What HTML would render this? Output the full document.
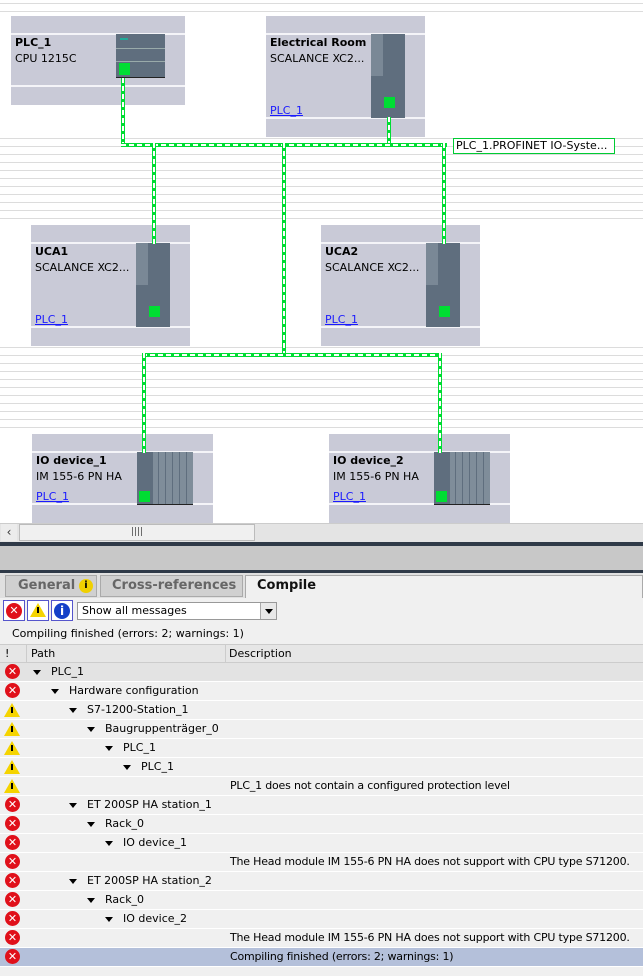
<!DOCTYPE html><html><head><style>
*{margin:0;padding:0;box-sizing:border-box}
body{width:643px;height:976px;position:relative;overflow:hidden;background:#fff;font-family:"DejaVu Sans","Liberation Sans",sans-serif;font-size:11px;color:#000}
.a{position:absolute}
.grid{position:absolute;left:0;width:643px;background:repeating-linear-gradient(to bottom,#dcdcdc 0 1px,transparent 1px 8px)}
.dev{position:absolute;background:#c9cad7}
.dev .l{position:absolute;left:0;right:0;height:2px;background:#f4f4f8}
.dev b{position:absolute;font-weight:bold;font-size:11px}
.dev span{position:absolute;font-size:11px}
.dev u{position:absolute;color:#1a1aff;font-size:11px}
.sw{position:absolute;background:#5f6e7e}
.sw .s{position:absolute;left:0;top:0;width:12px;height:42px;background:#7a8896}
.g{position:absolute;background:#00dd33}
.bh{position:absolute;height:4px;background:#00dd33}
.bh i,.bv i{position:absolute}
.bh i{left:0;right:0;top:1px;height:2px;background:repeating-linear-gradient(to right,#fff 0 5px,transparent 5px 8px)}
.bv{position:absolute;width:4px;background:#00dd33}
.bv i{top:0;bottom:0;left:1px;width:2px;background:repeating-linear-gradient(to bottom,#fff 0 5px,transparent 5px 8px)}
.row{position:absolute;left:0;width:643px;height:19px;background:#f0f0f0;border-bottom:1px solid #fff;font-size:11px;line-height:18px}
.row .t{position:absolute;white-space:nowrap}
.row .d{position:absolute;left:230px;white-space:nowrap;letter-spacing:-0.2px}
.e{position:absolute;left:5px;top:1px;width:15px;height:15px;border-radius:50%;background:#e0101a;color:#fff;font-weight:bold;font-size:11px;line-height:15px;text-align:center}
.w{position:absolute;left:4px;top:2px;width:0;height:0;border-left:8px solid transparent;border-right:8px solid transparent;border-bottom:14px solid #f5d400}
.w:after{content:"";position:absolute;left:-1px;top:4px;width:2px;height:6px;background:#000}
.tri{position:absolute;top:7px;width:0;height:0;border-left:4px solid transparent;border-right:4px solid transparent;border-top:5px solid #000}
</style></head><body>
<div class="grid" style="top:3px;height:10px"></div>
<div class="grid" style="top:138px;height:82px"></div>
<div class="grid" style="top:347px;height:85px"></div>

<div class="dev" style="left:11px;top:16px;width:174px;height:89px">
<div class="l" style="top:17px"></div><div class="l" style="top:69px"></div>
<b style="left:4px;top:20px">PLC_1</b><span style="left:4px;top:36px">CPU 1215C</span></div>
<div class="sw" style="left:116px;top:34px;width:49px;height:44px;border-bottom:1px solid #222"><div class="a" style="left:0;top:14px;width:49px;height:1px;background:#9aa"></div><div class="a" style="left:0;top:27px;width:49px;height:1px;background:#9aa"></div><div class="a" style="left:4px;top:4px;width:8px;height:2px;background:#2a9"></div></div>
<div class="g" style="left:119px;top:63px;width:11px;height:12px"></div>

<div class="dev" style="left:266px;top:16px;width:159px;height:121px">
<div class="l" style="top:17px"></div><div class="l" style="top:101px"></div>
<b style="left:4px;top:20px">Electrical Room</b><span style="left:4px;top:36px">SCALANCE XC2...</span><u style="left:4px;top:88px">PLC_1</u></div>
<div class="sw" style="left:371px;top:34px;width:34px;height:84px"><div class="s"></div></div>
<div class="g" style="left:384px;top:97px;width:11px;height:11px"></div>

<div class="dev" style="left:31px;top:225px;width:159px;height:121px">
<div class="l" style="top:17px"></div><div class="l" style="top:101px"></div>
<b style="left:4px;top:20px">UCA1</b><span style="left:4px;top:36px">SCALANCE XC2...</span><u style="left:4px;top:88px">PLC_1</u></div>
<div class="sw" style="left:136px;top:243px;width:34px;height:84px"><div class="s"></div></div>
<div class="g" style="left:149px;top:306px;width:11px;height:11px"></div>

<div class="dev" style="left:321px;top:225px;width:159px;height:121px">
<div class="l" style="top:17px"></div><div class="l" style="top:101px"></div>
<b style="left:4px;top:20px">UCA2</b><span style="left:4px;top:36px">SCALANCE XC2...</span><u style="left:4px;top:88px">PLC_1</u></div>
<div class="sw" style="left:426px;top:243px;width:34px;height:84px"><div class="s"></div></div>
<div class="g" style="left:439px;top:306px;width:11px;height:11px"></div>

<div class="dev" style="left:32px;top:434px;width:181px;height:89px">
<div class="l" style="top:17px"></div><div class="l" style="top:69px"></div>
<b style="left:4px;top:20px">IO device_1</b><span style="left:4px;top:36px">IM 155-6 PN HA</span><u style="left:4px;top:56px">PLC_1</u></div>
<div class="sw" style="left:137px;top:452px;width:56px;height:53px;border-bottom:1px solid #222;background:repeating-linear-gradient(to right,#5f6e7e 0 1px,#7f8d9a 1px 7px)"><div class="a" style="left:0;top:0;width:16px;height:52px;background:#5f6e7e"></div></div>
<div class="g" style="left:139px;top:491px;width:11px;height:11px"></div>

<div class="dev" style="left:329px;top:434px;width:181px;height:89px">
<div class="l" style="top:17px"></div><div class="l" style="top:69px"></div>
<b style="left:4px;top:20px">IO device_2</b><span style="left:4px;top:36px">IM 155-6 PN HA</span><u style="left:4px;top:56px">PLC_1</u></div>
<div class="sw" style="left:434px;top:452px;width:56px;height:53px;border-bottom:1px solid #222;background:repeating-linear-gradient(to right,#5f6e7e 0 1px,#7f8d9a 1px 7px)"><div class="a" style="left:0;top:0;width:16px;height:52px;background:#5f6e7e"></div></div>
<div class="g" style="left:436px;top:491px;width:11px;height:11px"></div>

<div class="bv" style="left:121px;top:78px;height:69px"><i></i></div>
<div class="bv" style="left:387px;top:117px;height:30px"><i></i></div>
<div class="bh" style="left:121px;top:143px;width:326px"><i></i></div>
<div class="bv" style="left:152px;top:143px;height:101px"><i></i></div>
<div class="bv" style="left:282px;top:143px;height:214px"><i></i></div>
<div class="bv" style="left:442px;top:143px;height:101px"><i></i></div>
<div class="bh" style="left:142px;top:353px;width:300px"><i></i></div>
<div class="bv" style="left:142px;top:353px;height:100px"><i></i></div>
<div class="bv" style="left:438px;top:353px;height:100px"><i></i></div>
<div class="a" style="left:453px;top:138px;width:162px;height:16px;border:1px solid #00cc33;background:#fff;font-size:11px;line-height:14px;padding-left:2px">PLC_1.PROFINET IO-Syste...</div>

<div class="a" style="left:0;top:523px;width:643px;height:19px;background:#e4e4e4;border-top:1px solid #ccc"></div>
<div class="a" style="left:1px;top:524px;width:16px;height:17px;background:#ececec;font-size:12px;line-height:16px;text-align:center;color:#333">&lsaquo;</div>
<div class="a" style="left:19px;top:524px;width:236px;height:17px;background:#f0f0f0;border:1px solid #bbb;text-align:center;font-size:9px;line-height:15px;color:#444">||||</div>
<div class="a" style="left:0;top:542px;width:643px;height:4px;background:#2f3a48"></div>
<div class="a" style="left:0;top:546px;width:643px;height:26px;background:#c8c8c8"></div>
<div class="a" style="left:0;top:570px;width:643px;height:3px;background:#2f3a48"></div>
<div class="a" style="left:0;top:573px;width:643px;height:26px;background:#e0e0e0"></div>
<div class="a" style="left:5px;top:575px;width:92px;height:22px;background:#d0d0d0;border:1px solid #aaa;font-size:13px;font-weight:bold;color:#666;padding:2px 0 0 12px">General</div>
<div class="a" style="left:79px;top:579px;width:14px;height:14px;border-radius:50%;background:#f0d000;font-size:10px;font-weight:bold;text-align:center;line-height:14px">i</div>
<div class="a" style="left:100px;top:575px;width:143px;height:22px;background:#d0d0d0;border:1px solid #aaa;font-size:13px;font-weight:bold;color:#666;padding:2px 0 0 11px">Cross-references</div>
<div class="a" style="left:245px;top:575px;width:398px;height:24px;background:#f0f0f0;border:1px solid #aaa;border-bottom:none;font-size:13px;font-weight:bold;color:#111;padding:2px 0 0 11px">Compile</div>
<div class="a" style="left:0;top:598px;width:643px;height:378px;background:#f0f0f0"></div>
<div class="a" style="left:3px;top:600px;width:22px;height:21px;border:1px solid #55c;background:#fff"><div class="e" style="left:2px;top:2px;width:16px;height:16px;line-height:16px">✕</div></div>
<div class="a" style="left:27px;top:600px;width:22px;height:21px;border:1px solid #55c;background:#fff"><div class="w" style="left:2px;top:2px"></div></div>
<div class="a" style="left:51px;top:600px;width:22px;height:21px;border:1px solid #55c;background:#fff"><div class="a" style="left:2px;top:2px;width:16px;height:16px;border-radius:50%;background:#1540c8;color:#fff;font-weight:bold;text-align:center;line-height:16px;font-size:12px">i</div></div>
<div class="a" style="left:77px;top:602px;width:200px;height:18px;background:#fff;border:1px solid #999;font-size:11px;line-height:16px;padding-left:4px">Show all messages</div>
<div class="a" style="left:260px;top:603px;width:16px;height:16px;background:#e8e8e8;border-left:1px solid #aaa"><div class="tri" style="left:4px;top:6px"></div></div>
<div class="a" style="left:12px;top:627px;font-size:11px">Compiling finished (errors: 2; warnings: 1)</div>
<div class="a" style="left:0;top:644px;width:643px;height:19px;background:#e6e6e6;border-top:1px solid #ccc;border-bottom:1px solid #ccc;font-size:11px;line-height:17px"><span class="a" style="left:5px">!</span><span class="a" style="left:26px;top:0;width:1px;height:17px;background:#ccc"></span><span class="a" style="left:31px">Path</span><span class="a" style="left:225px;top:0;width:1px;height:17px;background:#ccc"></span><span class="a" style="left:229px">Description</span></div>

<div class="row" style="top:663px;background:#e3e3e3"><div class="e">✕</div><div class="tri" style="left:33px"></div><span class="t" style="left:51px">PLC_1</span></div>
<div class="row" style="top:682px"><div class="e">✕</div><div class="tri" style="left:51px"></div><span class="t" style="left:69px">Hardware configuration</span></div>
<div class="row" style="top:701px"><div class="w"></div><div class="tri" style="left:69px"></div><span class="t" style="left:87px">S7-1200-Station_1</span></div>
<div class="row" style="top:720px"><div class="w"></div><div class="tri" style="left:87px"></div><span class="t" style="left:105px">Baugruppenträger_0</span></div>
<div class="row" style="top:739px"><div class="w"></div><div class="tri" style="left:105px"></div><span class="t" style="left:123px">PLC_1</span></div>
<div class="row" style="top:758px"><div class="w"></div><div class="tri" style="left:123px"></div><span class="t" style="left:141px">PLC_1</span></div>
<div class="row" style="top:777px"><div class="w"></div><span class="d">PLC_1 does not contain a configured protection level</span></div>
<div class="row" style="top:796px"><div class="e">✕</div><div class="tri" style="left:69px"></div><span class="t" style="left:87px">ET 200SP HA station_1</span></div>
<div class="row" style="top:815px"><div class="e">✕</div><div class="tri" style="left:87px"></div><span class="t" style="left:105px">Rack_0</span></div>
<div class="row" style="top:834px"><div class="e">✕</div><div class="tri" style="left:105px"></div><span class="t" style="left:123px">IO device_1</span></div>
<div class="row" style="top:853px"><div class="e">✕</div><span class="d">The Head module IM 155-6 PN HA does not support with CPU type S71200.</span></div>
<div class="row" style="top:872px"><div class="e">✕</div><div class="tri" style="left:69px"></div><span class="t" style="left:87px">ET 200SP HA station_2</span></div>
<div class="row" style="top:891px"><div class="e">✕</div><div class="tri" style="left:87px"></div><span class="t" style="left:105px">Rack_0</span></div>
<div class="row" style="top:910px"><div class="e">✕</div><div class="tri" style="left:105px"></div><span class="t" style="left:123px">IO device_2</span></div>
<div class="row" style="top:929px"><div class="e">✕</div><span class="d">The Head module IM 155-6 PN HA does not support with CPU type S71200.</span></div>
<div class="row" style="top:948px;background:#b4c0da"><div class="e">✕</div><span class="d">Compiling finished (errors: 2; warnings: 1)</span></div>
</body></html>
